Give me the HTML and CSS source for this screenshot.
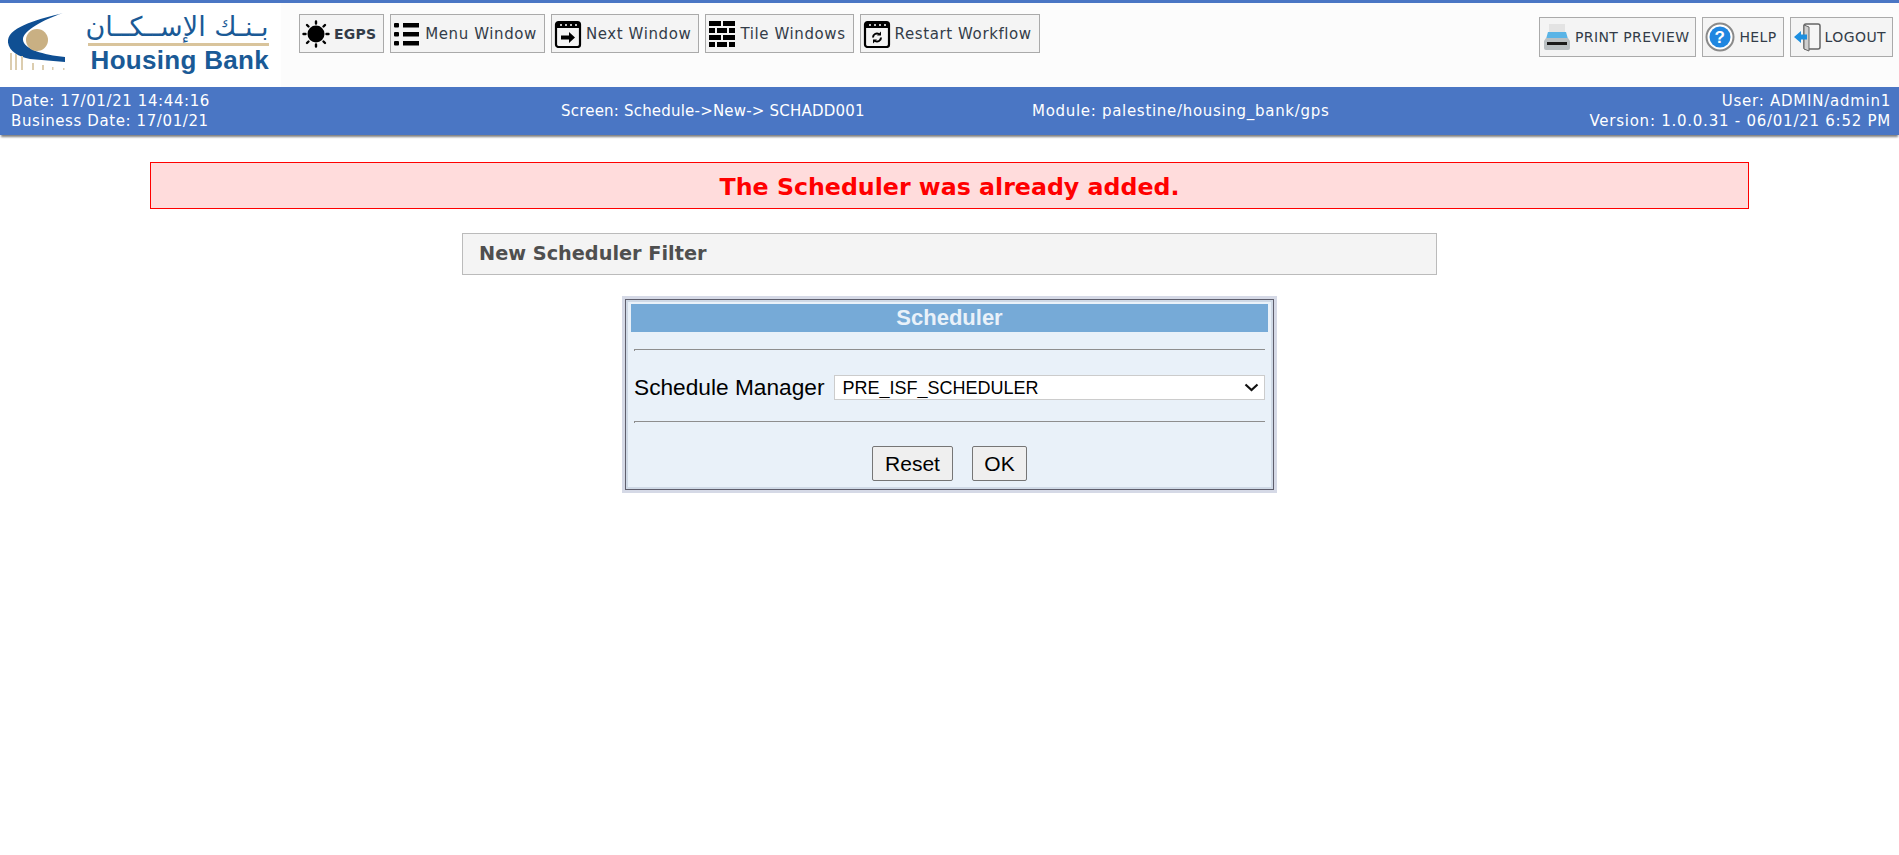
FILE: index.html
```html
<!DOCTYPE html>
<html>
<head lang="en">
    <meta charset="UTF-8">
    <title>Schedule New</title>
    <link rel="stylesheet" href="styles.css">
</head>
<body>
<div class="toolbar">
    <div class="logo">
        <svg class="logo-mark" width="60" height="58" viewBox="0 0 60 58">
            <path d="M55 0C32 6 2 13 0 27C-1 37 10 44 22 46L57 49L57 44C35 42 16 36 15 27C14 18 35 7 55 0Z" fill="#0f4f93"/>
            <circle cx="29" cy="27" r="11" fill="#c9b083"/>
            <path d="M2 40h2v17H2zM7 41h2v16H7zM13 43h2v14H13zM24 50h2v7H24zM34 52h2v5H34zM44 54h1.500v3H44zM55 55h1.500v2H55z" fill="#dccdaf"/>
        </svg>
        <div class="logo-words">
            <div class="logo-ar" lang="ar" dir="rtl">بـنـك الإســكــان</div>
            <div class="logo-line"></div>
            <div class="logo-en">Housing Bank</div>
        </div>
    </div>
    <div class="tools">
        <div class="tool">
            <svg width="28" height="28" viewBox="0 0 28 28">
                <circle cx="14" cy="14" r="8.500"/>
                <path d="M14 1.500v2M14 24.500v2M1.500 14h2M24.500 14h2M5 5l1.500 1.500M21.500 21.500l1.500 1.500M5 23l1.500-1.500M21.500 6.500l1.500-1.500" stroke="#000" stroke-width="2.400" stroke-linecap="round"/>
            </svg>
            <span class="tool-strong">EGPS</span>
        </div>
        <div class="tool">
            <svg width="28" height="28" viewBox="0 0 28 28">
                <rect x="1" y="3" width="5" height="4.500" rx="1"/>
                <rect x="1" y="12" width="5" height="4.500" rx="1"/>
                <rect x="1" y="21" width="5" height="4.500" rx="1"/>
                <path d="M10 3h16v4.500H10zM10 12h16v4.500H10zM10 21h16v4.500H10z"/>
            </svg>
            Menu Window
        </div>
        <div class="tool">
            <svg width="28" height="28" viewBox="0 0 28 28">
                <rect x="2" y="2" width="24" height="25" rx="2.500" fill="none" stroke="#000" stroke-width="2.200"/>
                <path d="M2 3h24v5H2z"/>
                <path d="M6 5h2M11 5h2M16 5h2M21 5h2" stroke="#fff" stroke-width="1.500"/>
                <path d="M7 15.500h8v-3.500l6 5.500-6 5.500v-3.500H7z"/>
            </svg>
            Next Window
        </div>
        <div class="tool">
            <svg width="28" height="28" viewBox="0 0 28 28">
                <path d="M1 1h12v5H1zM15 1h12v5H15zM1 8h6v5H1zM9 8h10v5H9zM21 8h6v5H21zM1 15h12v5H1zM15 15h12v5H15zM1 22h6v5H1zM9 22h10v5H9zM21 22h6v5H21z"/>
            </svg>
            Tile Windows
        </div>
        <div class="tool">
            <svg width="28" height="28" viewBox="0 0 28 28">
                <rect x="2" y="2" width="24" height="25" rx="2.500" fill="none" stroke="#000" stroke-width="2.200"/>
                <path d="M2 3h24v5H2z"/>
                <path d="M6 5h2M11 5h2M16 5h2M21 5h2" stroke="#fff" stroke-width="1.500"/>
                <path d="M10 17.500a4 4 0 0 1 6-3.500M18 17.500a4 4 0 0 1-6 3.500" fill="none" stroke="#000" stroke-width="2"/>
                <path d="M18 11.500v4h-4zM10 23.500v-4h4z"/>
            </svg>
            Restart Workflow
        </div>
    </div>
    <div class="tools tools-right">
        <div class="tool tool-caps tool-print">
            <svg width="28" height="28" viewBox="0 0 28 28">
                <path d="M6 1h16v10H6z" fill="#e3e3e3"/>
                <path d="M5 9h18l2 7H3z" fill="#5ab4e6"/>
                <path d="M3 15h22l2 3v7a2 2 0 0 1-2 2H3a2 2 0 0 1-2-2v-7z" fill="#b9bfc2"/>
                <path d="M4 19h20v3H4z" fill="#1a1a1a"/>
            </svg>
            PRINT PREVIEW
        </div>
        <div class="tool tool-caps">
            <svg width="30" height="30" viewBox="0 0 30 30">
                <circle cx="15" cy="15" r="13.500" fill="#fff" stroke="#8a8a8a" stroke-width="2"/>
                <circle cx="15" cy="15" r="10.500" fill="#1f86e0"/>
                <text x="15" y="21" class="help-mark">?</text>
            </svg>
            HELP
        </div>
        <div class="tool tool-caps">
            <svg width="28" height="30" viewBox="0 0 28 30">
                <rect x="11" y="2" width="16" height="25" rx="2" fill="#f6f6f6" stroke="#666" stroke-width="1.500"/>
                <path d="M11 3l5 2v24l-5-2z" fill="#cfcfcf" stroke="#666"/>
                <path d="M1 15l7-6v3.500h6v5H8V21z" fill="#1d8fe0"/>
            </svg>
            LOGOUT
        </div>
    </div>
</div>
<div class="status">
    <div class="status-col status-date">
        <div>Date: 17/01/21 14:44:16</div>
        <div>Business Date: 17/01/21</div>
    </div>
    <div class="status-screen">Screen: Schedule-&gt;New-&gt; SCHADD001</div>
    <div class="status-module">Module: palestine/housing_bank/gps</div>
    <div class="status-col status-user">
        <div>User: ADMIN/admin1</div>
        <div>Version: 1.0.0.31 - 06/01/21 6:52 PM</div>
    </div>
</div>
<div class="content">
    <div class="alert">The Scheduler was already added.</div>
    <div class="filter-title">New Scheduler Filter</div>
    <div class="dialog">
        <div class="dialog-box">
            <div class="dialog-head">Scheduler</div>
            <hr>
            <div class="field">
                <label>Schedule Manager</label>
                <div class="select-wrap">
                    <select>
                        <option>PRE_ISF_SCHEDULER</option>
                    </select>
                    <svg class="select-arrow" width="15" height="9" viewBox="0 0 15 9">
                        <path d="M1.500 1.500l6 5.500 6-5.500" fill="none" stroke="#111" stroke-width="2.200"/>
                    </svg>
                </div>
            </div>
            <hr>
            <div class="actions">
                <button class="btn-reset">Reset</button>
                <button class="btn-ok">OK</button>
            </div>
        </div>
    </div>
</div>
</body>
</html>
```

FILE: styles.css
```css
*{
    margin: 0;
    padding: 0;
    box-sizing: border-box;
}
body{
    background: #ffffff;
    font-family: "DejaVu Sans", sans-serif;
    height: 855px;
    overflow: hidden;
}
.toolbar{
    height: 87px;
    border-top: 3px solid #4a76c4;
    background: #fcfcfc;
    display: flex;
    align-items: flex-start;
}
.logo{
    width: 281px;
    height: 84px;
    background: #ffffff;
    display: flex;
    padding: 10px 0 0 8px;
}
.logo-mark{
    flex: none;
}
.logo-words{
    width: 184px;
    margin-left: 17px;
}
.logo-ar{
    font-size: 27px;
    line-height: 27px;
    color: #1a5a96;
    text-align: center;
    white-space: nowrap;
}
.logo-line{
    height: 3px;
    background: #d9c49c;
    margin: 3px 0 1px 3px;
}
.logo-en{
    font-family: "Liberation Sans", sans-serif;
    font-weight: bold;
    font-size: 26px;
    line-height: 26px;
    letter-spacing: 0.3px;
    color: #1a5a96;
    text-align: right;
    white-space: nowrap;
}
.tools{
    display: flex;
    gap: 6px;
    margin: 11px 0 0 18px;
}
.tools-right{
    margin: 14px 6px 0 auto;
}
.tool{
    height: 39px;
    padding: 0 7px 0 2px;
    display: flex;
    align-items: center;
    gap: 4px;
    background: #f4f4f4;
    border: 1px solid #aaaaaa;
    font-size: 15px;
    letter-spacing: 0.6px;
    color: #333c48;
    white-space: nowrap;
}
.tool svg{
    flex: none;
}
.tool-strong{
    font-weight: bold;
    font-size: 14px;
    letter-spacing: 0.2px;
}
.tool-caps{
    height: 40px;
    padding-right: 6px;
    font-size: 14px;
    letter-spacing: 0.4px;
    gap: 4px;
}
.tool-print{
    padding-left: 3px;
}
.help-mark{
    font-family: "Liberation Sans", sans-serif;
    font-weight: bold;
    font-size: 17px;
    fill: #ffffff;
    text-anchor: middle;
}
.status{
    height: 48px;
    background: #4a76c4;
    color: #ffffff;
    box-shadow: 0 3px 2px -1px #808080;
    display: flex;
    align-items: center;
    padding: 0 8px 0 11px;
    font-size: 15px;
    letter-spacing: 0.6px;
    line-height: 20px;
    white-space: nowrap;
}
.status-date{
    width: 550px;
}
.status-screen{
    width: 471px;
    letter-spacing: 0.2px;
}
.status-module{
    flex: 1;
    letter-spacing: 0.7px;
}
.status-user{
    text-align: right;
    letter-spacing: 0.75px;
}
.content{
    display: flex;
    flex-direction: column;
    align-items: center;
    padding-top: 27px;
}
.alert{
    width: 1599px;
    height: 47px;
    background: #ffdcdc;
    border: 1px solid #ff0000;
    color: #ff0000;
    font-weight: bold;
    font-size: 23.700px;
    line-height: 48px;
    text-align: center;
}
.filter-title{
    width: 975px;
    height: 42px;
    margin-top: 24px;
    padding-left: 16px;
    background: #f4f4f4;
    border: 1px solid #bbbbbb;
    color: #4f4f4f;
    font-weight: bold;
    font-size: 19.300px;
    line-height: 40px;
}
.dialog{
    width: 655px;
    height: 197px;
    margin-top: 21px;
    border: 3px solid #d5d9e6;
}
.dialog-box{
    height: 100%;
    border: 1px solid #5e5e6c;
    background: #e9f1f9;
    box-shadow: inset 0 0 0 2px #cfd9e6;
    padding: 4px 5px;
    font-family: "Liberation Sans", sans-serif;
}
.dialog-head{
    height: 28px;
    background: #76aad7;
    color: #e9f1f9;
    font-weight: bold;
    font-size: 22px;
    line-height: 27px;
    text-align: center;
}
.dialog-box hr{
    margin: 17px 3px 0;
    height: 2px;
    border: 0;
    border-top: 1px solid #8e8e8e;
    border-left: 1px solid #8e8e8e;
}
.field{
    display: flex;
    align-items: center;
    height: 29px;
    margin: 22px 3px 0;
}
.field label{
    font-size: 22.700px;
    color: #000000;
    white-space: nowrap;
}
.select-wrap{
    flex: 1;
    height: 25px;
    margin-left: 10px;
    position: relative;
}
.select-wrap select{
    width: 100%;
    height: 100%;
    padding-left: 7px;
    appearance: none;
    background: #ffffff;
    border: 1px solid #cccccc;
    font-family: "Liberation Sans", sans-serif;
    font-size: 18px;
    color: #000000;
}
.select-arrow{
    position: absolute;
    right: 6px;
    top: 8px;
}
.field + hr{
    margin-top: 19px;
}
.actions{
    display: flex;
    justify-content: center;
    gap: 19px;
    margin-top: 23px;
}
.actions button{
    height: 35px;
    background: #efefef;
    border: 1px solid #767676;
    border-radius: 2px;
    font-family: "Liberation Sans", sans-serif;
    font-size: 21px;
    color: #000000;
}
.btn-reset{
    width: 81px;
}
.btn-ok{
    width: 55px;
}
```
